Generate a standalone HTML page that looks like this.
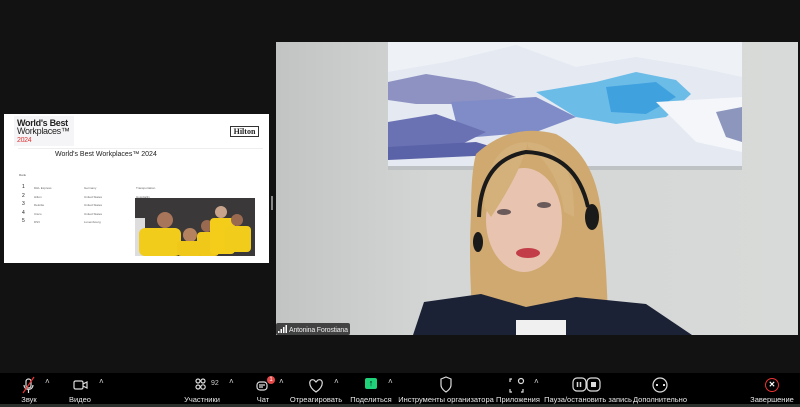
<!DOCTYPE html>
<html><head><meta charset="utf-8"><style>
*{margin:0;padding:0;box-sizing:border-box}
body{width:800px;height:407px;background:#121212;position:relative;overflow:hidden;font-family:"Liberation Sans",sans-serif}
.abs{position:absolute}
.tb{left:0;top:373px;width:800px;height:34px;background:#000}
.lbl{position:absolute;top:22px;font-size:7.5px;color:#e8e8e8;transform:translateX(-50%);white-space:nowrap}
.car{position:absolute;top:4px;color:#ddd;font-size:8px}
</style></head><body>
<div class="abs" style="left:4px;top:114px;width:265px;height:149px;background:#fff">
  <div class="abs" style="left:10px;top:2px;width:60px;height:30px;background:#f5f5f7"></div>
  <div class="abs" style="left:13px;top:5px;font-size:9px;line-height:8px;color:#222;font-weight:bold;letter-spacing:-0.3px">World's Best<br><span style="font-weight:normal">Workplaces™</span><br><span style="color:#d33;font-weight:normal;font-size:7px">2024</span></div>
  <div class="abs" style="left:226px;top:12px;width:29px;height:11px;border:1px solid #333;font-size:8px;font-family:'Liberation Serif',serif;font-weight:bold;text-align:center;line-height:9px;color:#222">Hilton</div>
  <div class="abs" style="left:14px;top:34px;width:245px;height:1px;background:#eee"></div>
  <div class="abs" style="left:51px;top:37px;font-size:7px;color:#222">World's Best Workplaces™ 2024</div>
  <div class="abs" style="left:15px;top:59px;font-size:3px;color:#555">Rank</div>
  <div class="abs" style="left:18px;top:69px;font-size:5px;line-height:8.6px;color:#222">1<br>2<br>3<br>4<br>5</div>
  <div class="abs" style="left:30px;top:70px;font-size:3px;line-height:8.6px;color:#666">DHL Express<br>Hilton<br>Deloitte<br>Cisco<br>DSV</div>
  <div class="abs" style="left:80px;top:70px;font-size:3px;line-height:8.6px;color:#666">Germany<br>United States<br>United States<br>United States<br>Luxembourg</div>
  <div class="abs" style="left:132px;top:70px;font-size:3px;line-height:8.6px;color:#666">Transportation<br>Hospitality</div>
  <svg class="abs" style="left:131px;top:84px" width="120" height="58">
    <rect width="120" height="58" fill="#3a3838"/>
    <rect x="0" y="20" width="10" height="38" fill="#ddd"/>
    <circle cx="30" cy="22" r="8" fill="#a8755a"/><rect x="4" y="30" width="42" height="28" rx="6" fill="#f2cc1b"/>
    <circle cx="55" cy="37" r="7" fill="#b5825f"/><rect x="42" y="43" width="26" height="15" rx="4" fill="#f0c81a"/>
    <circle cx="72" cy="28" r="6" fill="#9a6a50"/><rect x="62" y="34" width="22" height="24" rx="4" fill="#f0c81a"/>
    <circle cx="86" cy="14" r="6" fill="#c9a48c"/><rect x="75" y="20" width="25" height="36" rx="4" fill="#f4cc1a"/>
    <circle cx="102" cy="22" r="6" fill="#9a6a50"/><rect x="90" y="28" width="26" height="26" rx="4" fill="#f2cc1b"/>
  </svg>
</div>
<div class="abs" style="left:271px;top:196px;width:2px;height:14px;background:#888"></div>
<svg class="abs" style="left:276px;top:42px" width="522" height="293">
  <defs><linearGradient id="w" x1="0" x2="1"><stop offset="0" stop-color="#c2c4c3"/><stop offset="0.3" stop-color="#d4d6d5"/><stop offset="1" stop-color="#d8dad9"/></linearGradient></defs>
  <rect width="522" height="293" fill="url(#w)"/>
  <rect x="112" y="0" width="354" height="127" fill="#eef1f6"/>
  <path d="M112 30 L170 20 L240 3 L300 25 L360 15 L420 25 L466 35 L466 127 L112 127Z" fill="#e4e9f2"/>
  <path d="M112 40 L150 32 L200 40 L240 55 L200 62 L140 62 L112 58Z" fill="#8d92c2"/>
  <path d="M260 50 L320 40 L360 30 L400 38 L415 52 L390 75 L340 82 L300 75Z" fill="#6cbce8"/>
  <path d="M330 45 L380 40 L400 55 L370 72 L335 70Z" fill="#3fa1de"/>
  <path d="M175 60 L260 55 L300 75 L260 90 L200 95 L180 80Z" fill="#7f8cc8"/>
  <path d="M112 80 L160 72 L210 90 L180 105 L112 108Z" fill="#6a72b4"/>
  <path d="M112 105 L200 100 L240 112 L112 118Z" fill="#5a62a8"/>
  <path d="M380 60 L466 55 L466 110 L420 100Z" fill="#f4f6fa"/>
  <path d="M440 70 L466 65 L466 100 L450 95Z" fill="#8d96bd"/>
  <rect x="112" y="124" width="354" height="4" fill="#bfc2c4"/>
  <path d="M200 112 Q235 80 280 92 Q322 115 326 180 Q332 240 332 293 L198 293 Q192 230 195 170 Q195 130 200 112Z" fill="#cfa96f"/>
  <path d="M137 293 L148 260 L205 252 L250 265 L300 255 L370 262 L416 293Z" fill="#1c2236"/>
  <rect x="240" y="278" width="50" height="15" fill="#f0f0f0"/>
  <ellipse cx="248" cy="178" rx="38" ry="52" fill="#e8c4b0"/>
  <path d="M208 165 Q210 100 252 100 Q245 130 215 175Z" fill="#d4b07a"/>
  <path d="M252 100 Q300 105 298 175 L288 170 Q282 125 252 105Z" fill="#d4b07a"/>
  <ellipse cx="252" cy="211" rx="12" ry="5" fill="#c33d48"/>
  <ellipse cx="228" cy="170" rx="7" ry="3" fill="#6a5a5a"/><ellipse cx="268" cy="163" rx="7" ry="3" fill="#6a5a5a"/>
  <path d="M203 175 Q205 118 250 110 Q300 112 312 165" stroke="#1a1a1a" stroke-width="4" fill="none"/>
  <ellipse cx="316" cy="175" rx="7" ry="13" fill="#1a1a1a"/>
  <ellipse cx="202" cy="200" rx="5" ry="10" fill="#1a1a1a"/>
  <rect x="0" y="281" width="74" height="12" rx="2" fill="#2a2a2a" opacity="0.85"/>
  <rect x="2" y="289" width="1.5" height="2" fill="#fff"/><rect x="4.5" y="287" width="1.5" height="4" fill="#fff"/><rect x="7" y="285" width="1.5" height="6" fill="#fff"/><rect x="9.5" y="283" width="1.5" height="8" fill="#fff"/>
  <text x="13" y="290" font-size="7" textLength="59" fill="#eee" font-family="Liberation Sans">Antonina Forostiana</text>
</svg>
<div class="abs tb">
  <svg class="abs" style="left:0;top:0" width="800" height="34" fill="none" stroke="#ddd" stroke-width="1.2">
    <rect x="26" y="6" width="5" height="9" rx="2.5"/><path d="M24 12 a4.5 4.5 0 0 0 9 0 M28.5 17 v3"/><path d="M23 20 L34 4" stroke="#e33"/>
    <rect x="74" y="8" width="9" height="8" rx="1.5"/><path d="M83 11 l4 -2 v6 l-4 -2"/>
    <circle cx="198" cy="8" r="2"/><circle cx="203" cy="8" r="2"/><circle cx="198" cy="14" r="2"/><circle cx="203" cy="14" r="2.2"/>
    <rect x="257" y="9" width="10" height="8" rx="3"/><path d="M259 12h6M259 14h4"/>
    <path d="M316 19 C307 13 309 5 314 7 L316 9 L318 7 C323 5 325 13 316 19Z"/>
    <path d="M441 6 L446 4 L451 6 V12 C451 16 446 19 446 19 C446 19 441 16 441 12Z"/>
    <path d="M512 6 h-2 v3 M512 19 h-2 v-3 M521 19 h2 v-3"/><circle cx="521" cy="8" r="2.5"/>
    <rect x="573" y="5" width="13" height="13" rx="4"/><rect x="587" y="5" width="13" height="13" rx="4"/>
    <path d="M577.5 9v5M580.5 9v5" stroke-width="1.5"/>
    <circle cx="660" cy="12" r="7"/>
  </svg>
  <div class="abs" style="left:365px;top:5px;width:12px;height:11px;background:#1fd27a;border-radius:2px;color:#000;font-size:9px;text-align:center;line-height:11px;font-weight:bold">↑</div>
  <div class="abs" style="left:267px;top:3px;width:8px;height:8px;border-radius:50%;background:#e54848;color:#fff;font-size:6px;text-align:center;line-height:8px">1</div>
  <div class="abs" style="left:591px;top:9px;width:5px;height:5px;background:#ddd"></div>
  <div class="abs" style="left:656px;top:11px;width:9px;height:2px;border-left:2px dotted #ddd;border-right:2px dotted #ddd"></div>
  <div class="abs" style="left:765px;top:5px;width:14px;height:14px;border-radius:50%;border:1.5px solid #e33;color:#fff;font-size:8px;text-align:center;line-height:11px;font-weight:bold">✕</div>
  <div class="abs" style="left:211px;top:7px;font-size:7px;color:#ccc">92</div>
  <span class="car" style="left:45px">˄</span><span class="car" style="left:99px">˄</span><span class="car" style="left:229px">˄</span><span class="car" style="left:279px">˄</span><span class="car" style="left:334px">˄</span><span class="car" style="left:388px">˄</span><span class="car" style="left:534px">˄</span>
  <span class="lbl" style="left:29px">Звук</span><span class="lbl" style="left:80px">Видео</span><span class="lbl" style="left:202px">Участники</span><span class="lbl" style="left:263px">Чат</span><span class="lbl" style="left:316px">Отреагировать</span><span class="lbl" style="left:371px">Поделиться</span><span class="lbl" style="left:446px">Инструменты организатора</span><span class="lbl" style="left:518px">Приложения</span><span class="lbl" style="left:588px">Пауза/остановить запись</span><span class="lbl" style="left:660px">Дополнительно</span><span class="lbl" style="left:772px">Завершение</span>
  <div class="abs" style="left:0;top:31px;width:800px;height:3px;background:#2b302c"></div>
</div>
</body></html>
